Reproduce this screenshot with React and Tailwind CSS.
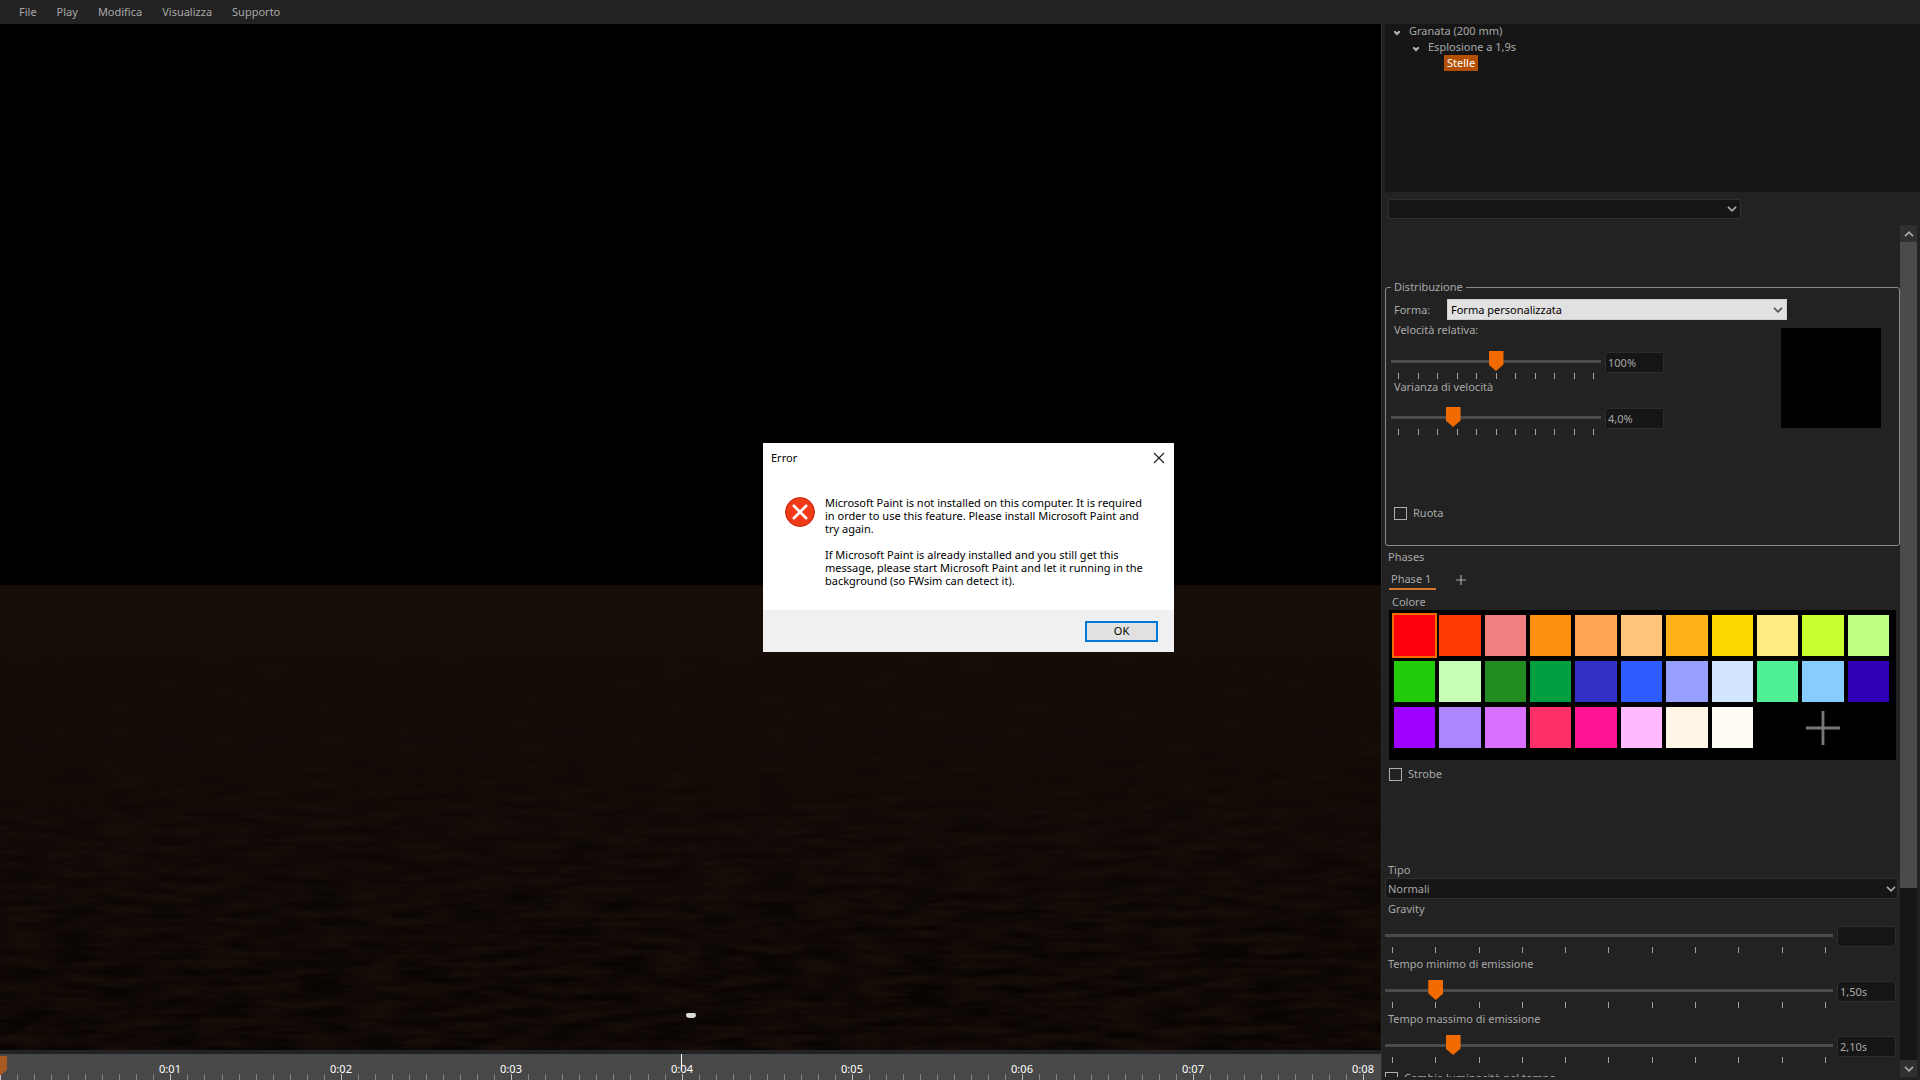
import { useState } from "react";

const MENU = ["File", "Play", "Modifica", "Visualizza", "Supporto"];

const COLORS = [
  "#ff000d", "#ff3a05", "#f08080", "#ff8f0e", "#ffa754", "#ffc57a", "#ffb217", "#ffd700", "#ffeb80", "#c8ff2e", "#bdff80",
  "#22cc0a", "#c8ffb8", "#228b22", "#00a040", "#3330c8", "#2e5cff", "#98a0ff", "#d2e5ff", "#50f095", "#87ccff", "#3000b8",
  "#a000ff", "#ac85ff", "#da70ff", "#ff3068", "#ff1493", "#ffbaff", "#fff5e4", "#fffcf5",
];

const TICKS = Array.from({ length: 11 }, (_, i) => i);
const PX_PER_SECOND = 170.4;

function Chevron({ className = "" }) {
  return (
    <svg viewBox="0 0 10 6" className={`h-1.5 w-2.5 fill-none ${className}`} aria-hidden="true">
      <path d="M1 .8 5 4.8 9 .8" stroke="currentColor" strokeWidth="1.7" />
    </svg>
  );
}

function TreeArrow() {
  return (
    <svg viewBox="0 0 8 5" className="mt-1 mr-2 h-[5px] w-2 fill-[#b0b0b0]" aria-hidden="true">
      <path d="M1 0h1.5L4 1.2 5.5 0H7v1.5L4 4.5 1 1.5z" />
    </svg>
  );
}

function MenuBar() {
  return (
    <header className="flex h-6 shrink-0 items-center gap-5 bg-[#222] px-[19px]">
      {MENU.map((item) => (
        <button key={item} type="button">{item}</button>
      ))}
    </header>
  );
}

function Slider({ label, value, onChange, text, small = false, empty = false }) {
  return (
    <div className="flex items-start gap-1">
      <div className={small ? "w-[210px]" : "flex-1"}>
        <input
          type="range"
          aria-label={label}
          min={0}
          max={100}
          value={value}
          onChange={(e) => onChange(Number(e.target.value))}
          className={`block h-[21px] w-full appearance-none bg-transparent [&::-webkit-slider-runnable-track]:h-[3px] [&::-webkit-slider-runnable-track]:bg-[#4b4b4b] [&::-webkit-slider-thumb]:-mt-[9px] [&::-webkit-slider-thumb]:h-5 [&::-webkit-slider-thumb]:w-[15px] [&::-webkit-slider-thumb]:appearance-none [&::-webkit-slider-thumb]:bg-[#f26b00] [&::-webkit-slider-thumb]:[clip-path:polygon(0_0,100%_0,100%_68%,50%_100%,0_68%)] ${empty ? "[&::-webkit-slider-thumb]:opacity-0" : ""}`}
        />
        <div className="mt-px flex justify-between px-[7px]">
          {TICKS.map((t) => (
            <span key={t} className="h-1.5 w-px bg-[#a0a0a0]" />
          ))}
        </div>
      </div>
      <input
        type="text"
        aria-label={`${label} valore`}
        defaultValue={text}
        className="mt-px h-[21px] w-[59px] rounded-xs border border-[#2c2c2c] bg-[#161616] px-0.5"
      />
    </div>
  );
}

function CheckBox({ label }) {
  return (
    <label className="flex items-center gap-1.5">
      <input type="checkbox" className="size-[13px] appearance-none border border-[#b0b0b0] checked:bg-[#f26b00]" />
      {label}
    </label>
  );
}

function Tree() {
  return (
    <div className="h-[168px] shrink-0 bg-[#161616] leading-4">
      <div className="-mt-px flex items-center pl-2">
        <TreeArrow />
        Granata (200 mm)
      </div>
      <div className="flex items-center pl-[27px]">
        <TreeArrow />
        Esplosione a 1,9s
      </div>
      <div className="pl-[59px]">
        <span className="inline-block bg-[#b35000] px-[3px] text-white">Stelle</span>
      </div>
    </div>
  );
}

function Distribution() {
  const [speed, setSpeed] = useState(50);
  const [variance, setVariance] = useState(28);
  return (
    <fieldset className="mt-[54px] h-[267px] rounded-[3px] border border-[#8a8a8a] pl-[5px]">
      <legend className="px-[3px] leading-4">Distribuzione</legend>
      <div className="mt-1 flex items-center pl-[3px]">
        <label htmlFor="forma" className="w-[53px]">Forma:</label>
        <div className="relative flex items-center">
          <select id="forma" className="h-[21px] w-[340px] appearance-none border border-[#cfcfcf] bg-[#e1e1e1] px-[3px] text-black">
            <option>Forma personalizzata</option>
          </select>
          <Chevron className="pointer-events-none absolute right-1 text-[#555]" />
        </div>
      </div>
      <div className="flex justify-between pr-[18px]">
        <div>
          <p className="pl-[3px] leading-5">Velocità relativa:</p>
          <div className="pt-[11px]">
            <Slider label="Velocità relativa" value={speed} onChange={setSpeed} text="100%" small />
          </div>
          <p className="pl-[3px] leading-4">Varianza di velocità</p>
          <div className="pt-3">
            <Slider label="Varianza di velocità" value={variance} onChange={setVariance} text="4,0%" small />
          </div>
        </div>
        <div className="mt-2 size-[100px] bg-black" />
      </div>
      <div className="mt-[70px] pl-[3px]">
        <CheckBox label="Ruota" />
      </div>
    </fieldset>
  );
}

function Palette() {
  const [selected, setSelected] = useState(0);
  return (
    <div className="mx-1 grid h-[150px] auto-rows-[41px] grid-cols-11 gap-x-1 gap-y-[5px] bg-black py-[5px] pr-[7px] pl-[5px]">
      {COLORS.map((c, i) => (
        <button
          key={c}
          type="button"
          aria-label={c}
          onClick={() => setSelected(i)}
          className={i === selected ? "outline-2 outline-[#f26b00]" : ""}
          style={{ backgroundColor: c }}
        />
      ))}
      <button type="button" aria-label="Aggiungi colore" className="col-span-3 flex items-center justify-center text-[#777]">
        <svg viewBox="0 0 34 34" className="size-[34px]"><path d="M17 0v34M0 17h34" stroke="currentColor" strokeWidth="2.8" /></svg>
      </button>
    </div>
  );
}

function Phases() {
  const [min, setMin] = useState(10);
  const [max, setMax] = useState(14);
  return (
    <>
      <p className="mt-[3px] pl-[3px] leading-4">Phases</p>
      <div className="mt-[5px] flex h-5 items-stretch pl-1">
        <button type="button" className="w-[47px] border-b-2 border-[#d8732c] pl-0.5 text-left">Phase 1</button>
        <button type="button" aria-label="Aggiungi fase" className="ml-5 flex items-center">
          <svg viewBox="0 0 10 10" className="size-2.5"><path d="M5 0v10M0 5h10" stroke="currentColor" strokeWidth="1.2" /></svg>
        </button>
      </div>
      <p className="mt-1 pl-[7px] leading-4">Colore</p>
      <Palette />
      <div className="mt-1.5 pl-1"><CheckBox label="Strobe" /></div>

      <label htmlFor="tipo" className="mt-20 block pl-[3px] leading-4">Tipo</label>
      <div className="relative mr-0.5 flex items-center">
        <select id="tipo" className="h-[21px] w-full appearance-none rounded-xs border border-[#303030] bg-[#161616] px-0.5">
          <option>Normali</option>
        </select>
        <Chevron className="pointer-events-none absolute right-0.5" />
      </div>
      <div className="mt-0.5 flex flex-col gap-[3px] pr-1">
        <div>
          <p className="mb-2 pl-[3px] leading-4">Gravity</p>
          <Slider label="Gravity" value={0} onChange={() => {}} text="" empty />
        </div>
        <div>
          <p className="mb-2 pl-[3px] leading-4">Tempo minimo di emissione</p>
          <Slider label="Tempo minimo di emissione" value={min} onChange={setMin} text="1,50s" />
        </div>
        <div>
          <p className="mb-2 pl-[3px] leading-4">Tempo massimo di emissione</p>
          <Slider label="Tempo massimo di emissione" value={max} onChange={setMax} text="2,10s" />
        </div>
        <div className="pt-1"><CheckBox label="Cambia luminosità nel tempo" /></div>
      </div>
    </>
  );
}

function ScrollBar() {
  return (
    <div className="flex w-[17px] shrink-0 flex-col bg-[#161616]">
      <button type="button" aria-label="Su" className="flex h-[17px] items-center justify-center bg-[#303030]">
        <Chevron className="rotate-180" />
      </button>
      <div className="flex-1">
        <div className="h-[79%] bg-[#4b4b4b]" />
      </div>
      <button type="button" aria-label="Giù" className="flex h-[17px] items-center justify-center bg-[#303030]">
        <Chevron />
      </button>
    </div>
  );
}

function SidePanel() {
  return (
    <aside className="flex w-[539px] shrink-0 flex-col overflow-hidden border-l border-[#2c2c2c] bg-[#222] pl-[3px]">
      <Tree />
      <div className="relative mt-[7px] ml-[3px] flex w-[353px] items-center">
        <select aria-label="Effetto" className="h-5 w-full appearance-none rounded-xs border border-[#303030] bg-[#161616]">
          <option></option>
        </select>
        <Chevron className="pointer-events-none absolute right-1" />
      </div>
      <div className="mt-1.5 mb-[3px] flex min-h-0 flex-1 pr-[3px]">
        <div className="min-w-0 flex-1 overflow-hidden">
          <Distribution />
          <Phases />
        </div>
        <ScrollBar />
      </div>
    </aside>
  );
}

function Viewport() {
  return (
    <div className="flex min-h-0 flex-1 flex-col bg-black">
      <div className="grow-[561]" />
      <div className="relative grow-[465] overflow-hidden bg-[#160d08]">
        <svg className="absolute inset-0 size-full" aria-hidden="true">
          <filter id="planks" x="0" y="0" width="100%" height="100%" colorInterpolationFilters="sRGB">
            <feTurbulence type="fractalNoise" baseFrequency="0.02 0.12" numOctaves="3" seed="4" />
            <feColorMatrix values="0 0 0 0 0.03  0 0 0 0 0.015  0 0 0 0 0.01  2 0 0 0 -0.6" />
          </filter>
          <linearGradient id="fade" x2="0" y2="1">
            <stop offset="0.15" stopColor="#000" />
            <stop offset="0.8" stopColor="#fff" />
          </linearGradient>
          <mask id="near"><rect width="100%" height="100%" fill="url(#fade)" /></mask>
          <g mask="url(#near)"><rect width="100%" height="100%" filter="url(#planks)" /></g>
        </svg>
        {/* launch position on the ground */}
        <span className="absolute bottom-8 left-[49.7%] h-[5px] w-2.5 rounded-t-xs rounded-b-[4px] bg-[#dcdcdc]" />
      </div>
    </div>
  );
}

function Timeline() {
  return (
    <div className="h-[30px] shrink-0 border-t-4 border-[#222] bg-[#484848] text-white">
      <svg className="size-full" aria-hidden="true">
        {Array.from({ length: 81 }, (_, i) => (
          <rect
            key={i}
            x={Math.round((i * PX_PER_SECOND) / 10)}
            y="20"
            width="1"
            height="6"
            fill={i % 10 === 0 ? "#c0c0c0" : "#858585"}
          />
        ))}
        <path d="M0 2h7v14l-6 5H0z" fill="#a85a22" />
        <rect x="681" y="0" width="1" height="16" fill="#fff" />
        {[1, 2, 3, 4, 5, 6, 7, 8].map((s) => (
          <text key={s} x={Math.round(s * PX_PER_SECOND)} y="19" textAnchor="middle" fill="#fff">
            0:0{s}
          </text>
        ))}
      </svg>
    </div>
  );
}

function ErrorDialog() {
  return (
    <div className="pointer-events-none fixed inset-0 flex items-center justify-center pt-[15px] pl-[17px] text-black">
      <div role="alertdialog" aria-labelledby="error-title" className="pointer-events-auto w-[411px] bg-white">
        <div className="flex h-[30px] items-center justify-between pr-[9px] pl-2">
          <h1 id="error-title">Error</h1>
          <button type="button" aria-label="Close">
            <svg viewBox="0 0 12 12" className="size-3"><path d="M1 1l10 10M11 1 1 11" stroke="#222" strokeWidth="1.2" /></svg>
          </button>
        </div>
        <div className="flex gap-2.5 pt-[23px] pr-5 pb-[23px] pl-[22px]">
          <svg viewBox="0 0 30 30" className="mt-px size-[30px] shrink-0" aria-hidden="true">
            <circle cx="15" cy="15" r="14.5" fill="#f03a17" stroke="#c02a10" />
            <path d="M8 8l14 14M22 8 8 22" stroke="#fff" strokeWidth="2.5" />
          </svg>
          <div className="leading-[13px]">
            <p>
              Microsoft Paint is not installed on this computer. It is required<br />
              in order to use this feature. Please install Microsoft Paint and<br />
              try again.
            </p>
            <p className="mt-[13px]">
              If Microsoft Paint is already installed and you still get this<br />
              message, please start Microsoft Paint and let it running in the<br />
              background (so FWsim can detect it).
            </p>
          </div>
        </div>
        <div className="flex h-[42px] items-center justify-end bg-[#f0f0f0] pr-4">
          <button type="button" className="h-[21px] w-[73px] border-2 border-[#0078d7] bg-[#e1e1e1]">OK</button>
        </div>
      </div>
    </div>
  );
}

export default function App() {
  return (
    <div className="flex h-screen flex-col overflow-hidden bg-[#222] font-['Noto_Sans',sans-serif] text-[11px] leading-4 text-[#a8a8a8]">
      <MenuBar />
      <main className="flex min-h-0 flex-1">
        <section className="flex min-w-0 flex-1 flex-col">
          <Viewport />
          <Timeline />
        </section>
        <SidePanel />
      </main>
      <ErrorDialog />
    </div>
  );
}
